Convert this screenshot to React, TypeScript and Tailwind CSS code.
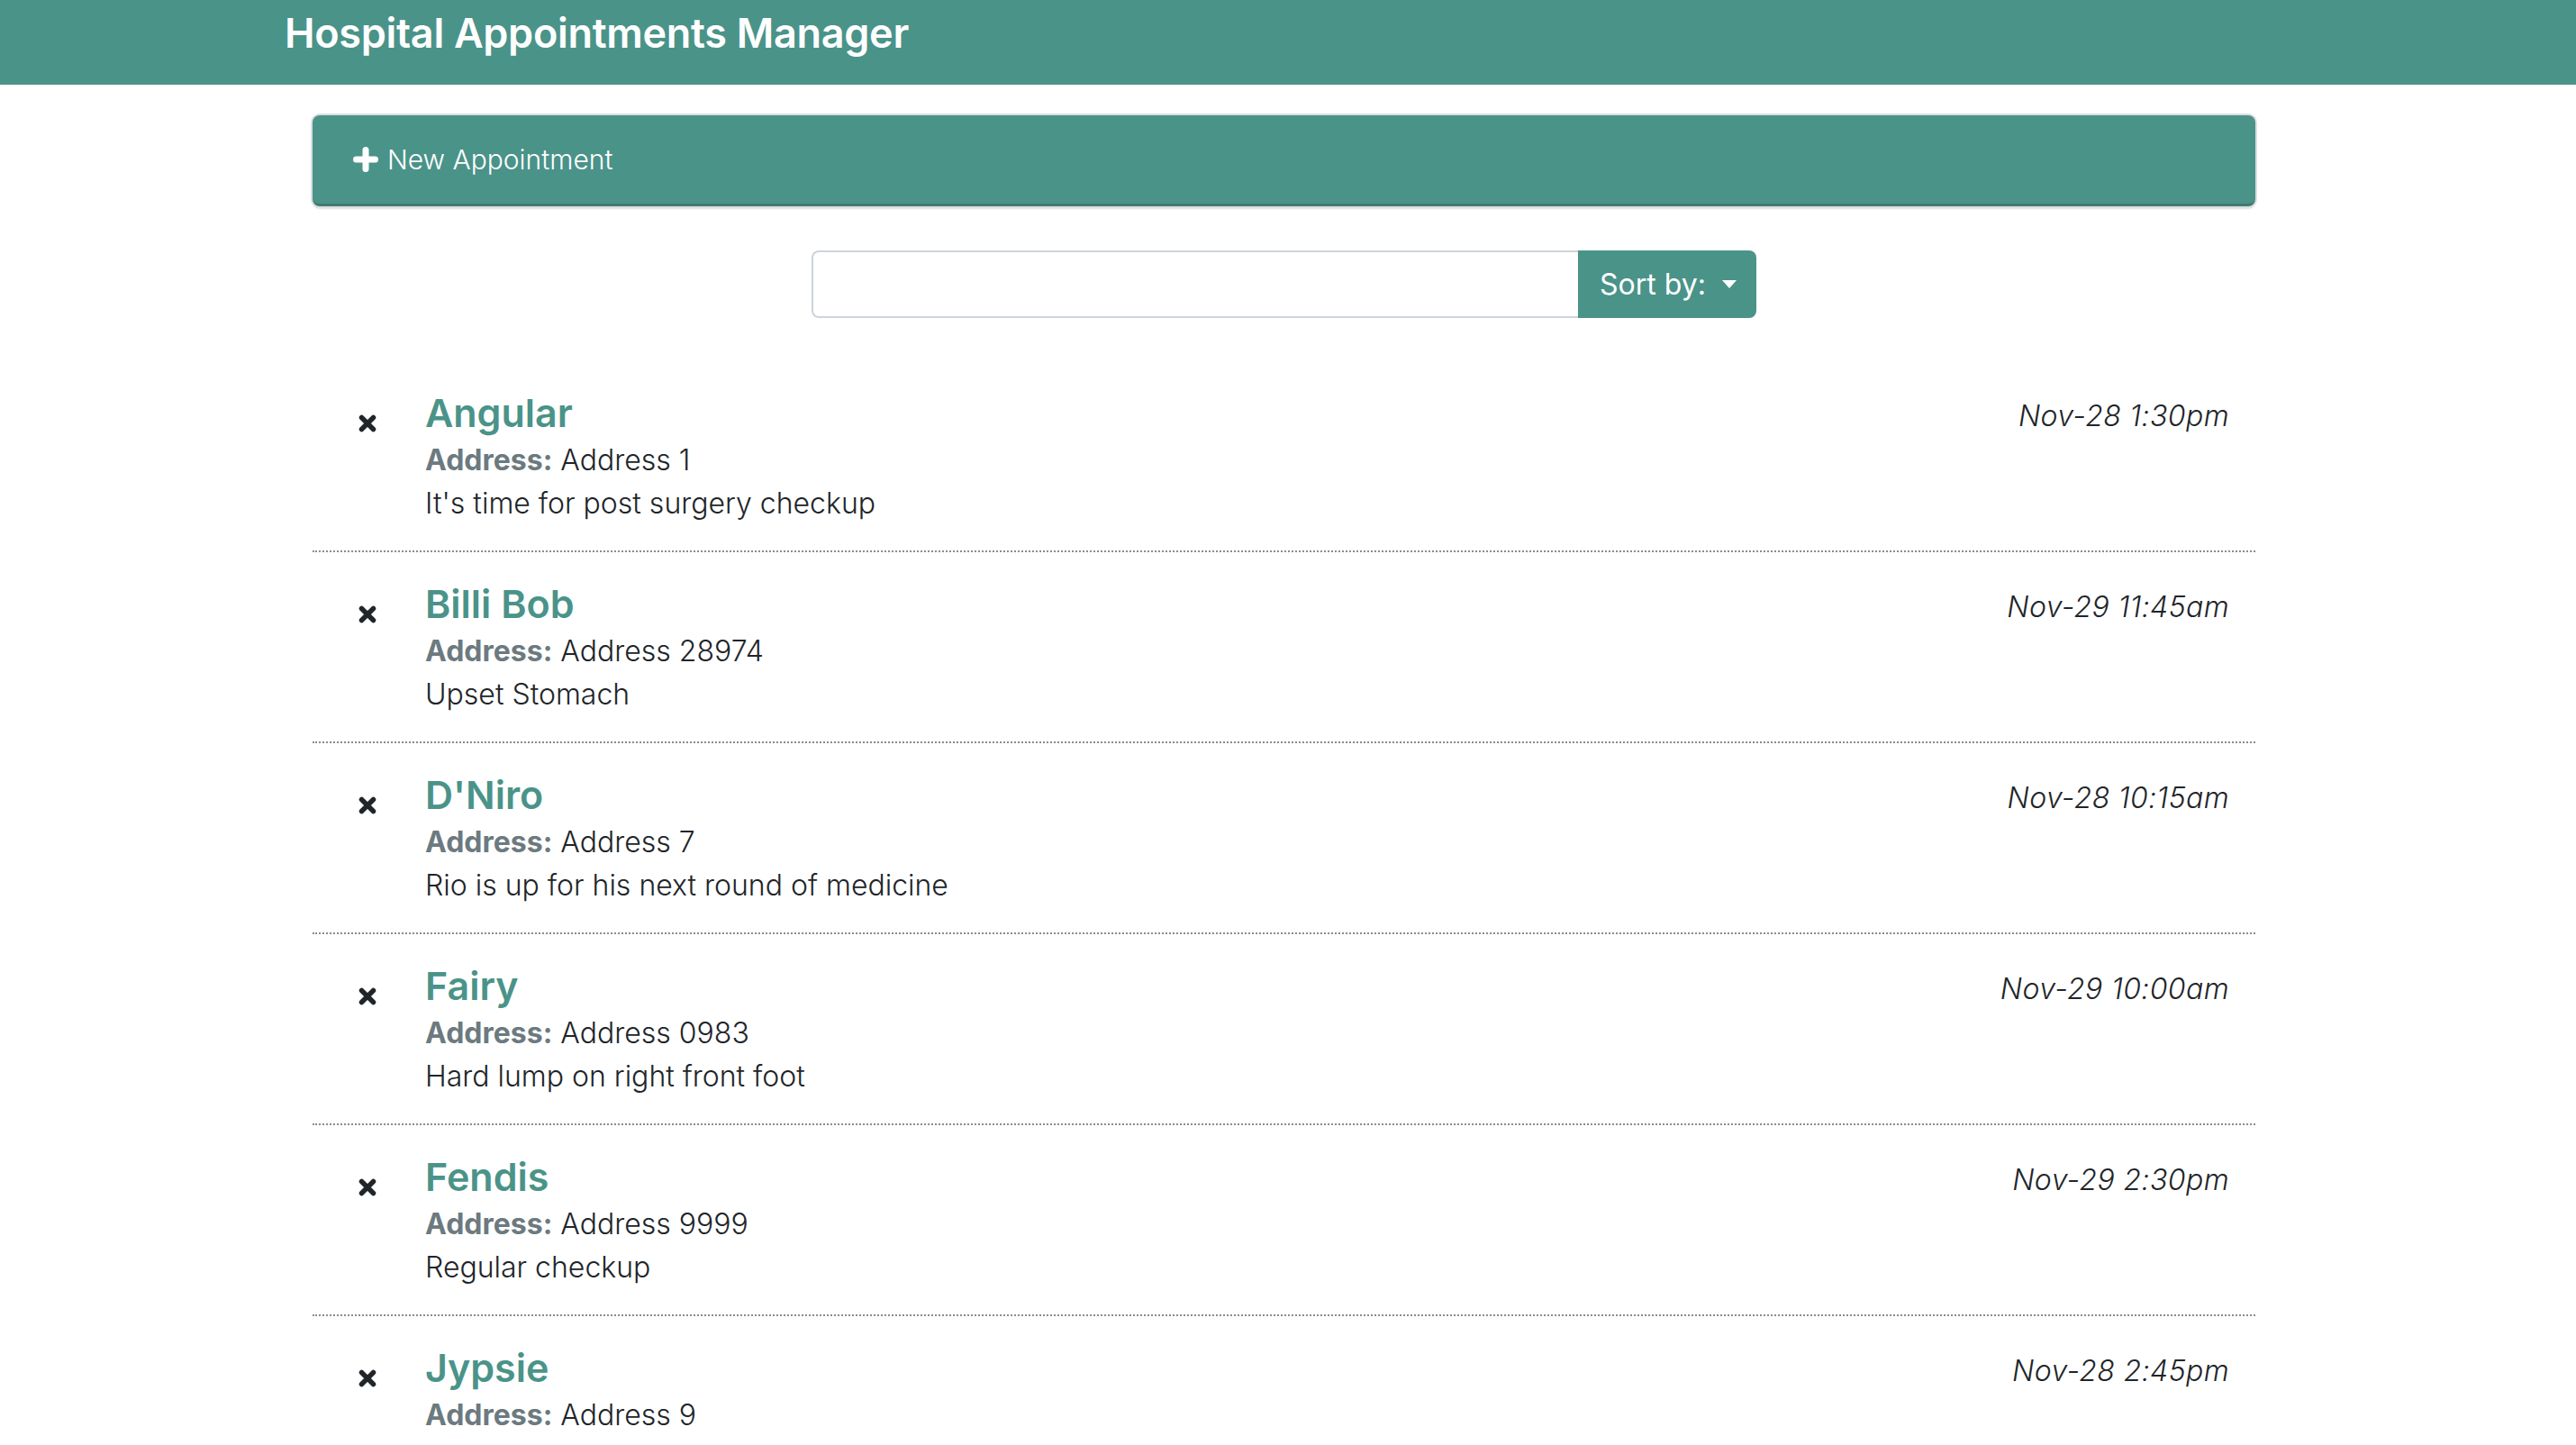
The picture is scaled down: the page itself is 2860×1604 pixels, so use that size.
import React from "react";

// Appointment shape
interface Appointment {
  name: string;
  address: string;
  notes: string;
  date: string;
}

const appointments: Appointment[] = [
  { name: "Angular", address: "Address 1", notes: "It's time for post surgery checkup", date: "Nov-28 1:30pm" },
  { name: "Billi Bob", address: "Address 28974", notes: "Upset Stomach", date: "Nov-29 11:45am" },
  { name: "D'Niro", address: "Address 7", notes: "Rio is up for his next round of medicine", date: "Nov-28 10:15am" },
  { name: "Fairy", address: "Address 0983", notes: "Hard lump on right front foot", date: "Nov-29 10:00am" },
  { name: "Fendis", address: "Address 9999", notes: "Regular checkup", date: "Nov-29 2:30pm" },
  { name: "Jypsie", address: "Address 9", notes: "", date: "Nov-28 2:45pm" },
];

function PlusIcon() {
  return (
    <svg width="28" height="28" viewBox="0 0 28 28" className="shrink-0">
      <path d="M14 3.5v21M3.5 14h21" stroke="white" strokeWidth="7" strokeLinecap="round" />
    </svg>
  );
}

function TimesIcon() {
  return (
    <svg width="20" height="20" viewBox="0 0 20 20">
      <path d="M3.5 3.5l13 13M16.5 3.5l-13 13" stroke="#212529" strokeWidth="5.5" strokeLinecap="round" />
    </svg>
  );
}

export default function App() {
  return (
    <div className="min-h-screen bg-white font-['Inter','Liberation_Sans',sans-serif] text-[#212529]">
      {/* Top bar */}
      <header className="h-[94px] bg-[#4a9389]">
        <div className="w-[2280px] mx-auto px-[26px] pt-[7px]">
          <h1 className="text-[45px] leading-[60px] font-semibold text-white tracking-[-0.3px]">
            Hospital Appointments Manager
          </h1>
        </div>
      </header>

      <main className="w-[2157px] ml-[347px]">
        {/* Add appointment bar */}
        <div className="mt-[34px] h-[101px] rounded-[8px] bg-[#4a9389] border-b-[3px] border-[#3f7b73] shadow-[0_0_0_2px_#dedede,0_3px_2px_rgba(0,0,0,0.12)] flex items-center pl-[45px] gap-[10px]">
          <PlusIcon />
          <span className="text-[30px] font-light text-white">New Appointment</span>
        </div>

        {/* Search + sort */}
        <div className="mt-[49px] flex justify-center">
          <div className="flex h-[75px] w-[1049px]">
            <input
              type="text"
              className="flex-1 border-2 border-r-0 border-[#ced4da] rounded-l-[8px] px-[24px] text-[32px] outline-none"
            />
            <button className="w-[198px] bg-[#4a9389] rounded-r-[8px] text-white text-[32px] flex items-center pl-[24px]">
              Sort by:
              <span className="ml-[18px] w-0 h-0 border-t-[9px] border-t-white border-x-[8px] border-x-transparent" />
            </button>
          </div>
        </div>

        {/* Appointment list */}
        <ul className="mt-[48px]">
          {appointments.map((a, i) => (
            <li
              key={a.name}
              className={
                i !== appointments.length - 1
                  ? "flex items-start pl-[51px] pr-[29px] pt-[30px] pb-[28px] border-b-2 border-dotted border-[#8c8c8c]"
                  : "flex items-start pl-[51px] pr-[29px] pt-[30px] pb-[28px]"
              }
            >
              <div className="pt-[29px] w-[74px] shrink-0">
                <TimesIcon />
              </div>
              <div className="flex-1">
                <div className="text-[43px] leading-[54px] font-semibold text-[#4a9389] mb-[2px]">{a.name}</div>
                <div className="text-[32px] leading-[48px] font-light">
                  <span className="font-bold text-[#6c7a80]">Address:</span> {a.address}
                </div>
                <div className="text-[32px] leading-[48px] font-light">{a.notes}</div>
              </div>
              <div className="pt-[7px] text-[32px] leading-[48px] font-light italic tracking-[0.4px]">{a.date}</div>
            </li>
          ))}
        </ul>
      </main>
    </div>
  );
}
